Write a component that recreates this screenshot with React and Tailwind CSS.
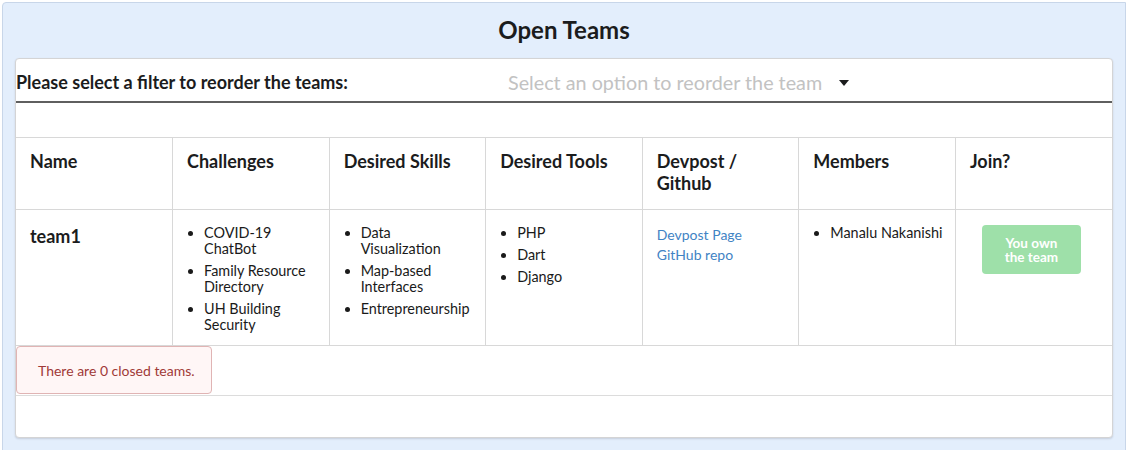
import React from 'react';

const team = {
  name: 'team1',
  challenges: ['COVID-19 ChatBot', 'Family Resource Directory', 'UH Building Security'],
  skills: ['Data Visualization', 'Map-based Interfaces', 'Entrepreneurship'],
  tools: ['PHP', 'Dart', 'Django'],
  members: ['Manalu Nakanishi'],
};

const headers = ['Name', 'Challenges', 'Desired Skills', 'Desired Tools', 'Devpost / Github', 'Members', 'Join?'];

function BulletList({ items, nowrap }) {
  return (
    <ul className={`list-disc pl-[17px] text-[14.4px] leading-[16px] text-[#1a1a1a] flex flex-col gap-[6px] ${nowrap ? 'whitespace-nowrap' : ''}`}>
      {items.map((item) => (
        <li key={item}>{item}</li>
      ))}
    </ul>
  );
}

export default function App() {
  return (
    <div className="w-[1126px] h-[450px] overflow-hidden bg-white font-['Lato','Noto_Sans',sans-serif] pt-[2px] pl-[2px]">
      <div className="h-[460px] bg-[#e3eefc] border border-[#c8d6e9] rounded-tl-[4px]">
        <h2 className="h-[55px] pt-[13px] text-center text-[24px] leading-[28px] font-bold text-[#1b1c1d]">
          Open Teams
        </h2>

        <div className="ml-[12px] w-[1098px] h-[380px] bg-white border border-[#d4d4d5] rounded-[4px] shadow-[0_1px_2px_rgba(34,36,38,0.15)]">
          {/* Filter row */}
          <div className="flex items-center h-[44px] pt-[3px] border-b-2 border-[#5f5f5f]">
            <span className="w-[492px] text-[18px] font-bold text-[#1b1c1d] leading-[22px]">
              Please select a filter to reorder the teams:
            </span>
            <div className="flex items-center gap-[17px] pt-[2px]">
              <span className="text-[19.75px] leading-[24px] text-[#c2c2c2]">
                Select an option to reorder the team
              </span>
              <svg width="10" height="6" viewBox="0 0 10 6" className="mt-[1px]">
                <path d="M0 0 L10 0 L5 6 Z" fill="#1b1c1d" />
              </svg>
            </div>
          </div>

          <div className="h-[34px]" />

          <table className="w-full table-fixed border-collapse">
            <thead>
              <tr className="h-[72px]">
                {headers.map((h, i) => (
                  <th
                    key={h}
                    className={`align-top text-left pl-[14px] pr-[16px] pt-[12px] text-[18px] leading-[22px] font-bold text-[#1b1c1d] border-t border-b border-[#d8d8d8] ${i > 0 ? 'border-l' : ''}`}
                  >
                    {h}
                  </th>
                ))}
              </tr>
            </thead>
            <tbody>
              <tr className="h-[136px]">
                <td className="align-top pl-[14px] pr-[16px] pt-[15px] text-[18px] leading-[22px] font-bold text-[#1b1c1d] border-b border-[#d8d8d8]">
                  {team.name}
                </td>
                <td className="align-top pl-[14px] pr-[16px] pt-[15px] border-l border-b border-[#d8d8d8]">
                  <BulletList items={team.challenges} />
                </td>
                <td className="align-top pl-[14px] pr-[16px] pt-[15px] border-l border-b border-[#d8d8d8]">
                  <BulletList items={team.skills} />
                </td>
                <td className="align-top pl-[14px] pr-[16px] pt-[15px] border-l border-b border-[#d8d8d8]">
                  <BulletList items={team.tools} />
                </td>
                <td className="align-top pl-[14px] pr-[16px] pt-[15px] border-l border-b border-[#d8d8d8]">
                  <div className="flex flex-col text-[14px] leading-[20px] text-[#4183c4]">
                    <a href="#">Devpost Page</a>
                    <a href="#">GitHub repo</a>
                  </div>
                </td>
                <td className="align-top pl-[14px] pr-[8px] pt-[15px] border-l border-b border-[#d8d8d8]">
                  <BulletList items={team.members} nowrap />
                </td>
                <td className="align-top pl-[14px] pr-[14px] pt-[15px] border-l border-b border-[#d8d8d8]">
                  <button className="ml-[12px] w-[99px] h-[49px] rounded-[4px] bg-[#9ee0a9] text-white text-[13.5px] leading-[14px] font-bold">
                    You own
                    <br />
                    the team
                  </button>
                </td>
              </tr>
            </tbody>
          </table>

          {/* Closed teams message */}
          <div className="border-b border-[#dcdcdc] pb-[1px]">
            <div className="w-[196px] h-[48px] flex items-center pl-[21px] bg-[#fff6f6] border border-[#e0b4b4] rounded-[4px] text-[14px] text-[#9f3a38]">
              There are 0 closed teams.
            </div>
          </div>
        </div>
      </div>
    </div>
  );
}
